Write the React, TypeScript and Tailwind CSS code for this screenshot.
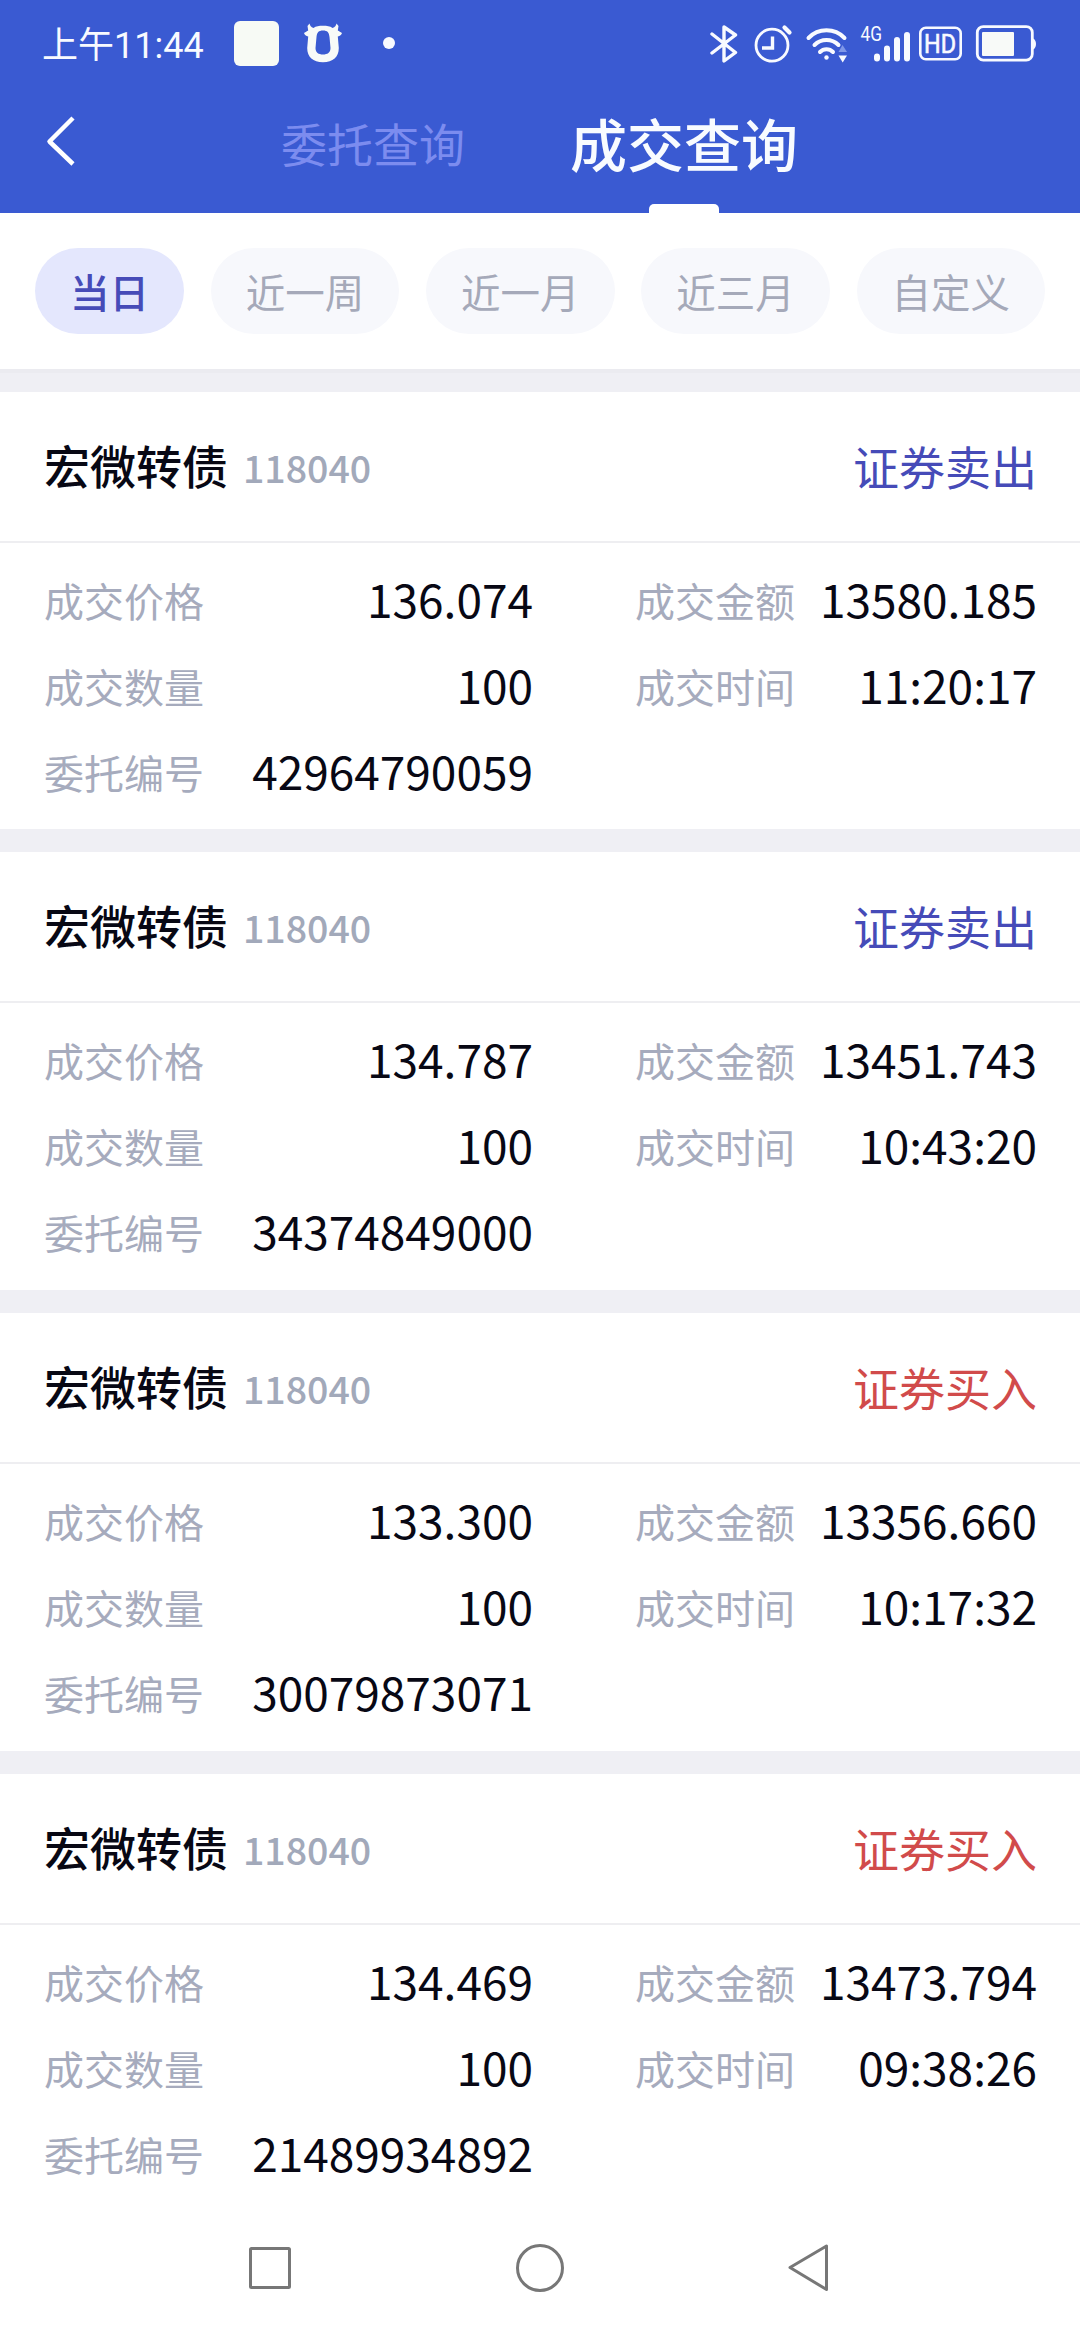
import clsx from "clsx";

type Trade = {
  side: "sell" | "buy";
  price: string;
  amount: string;
  time: string;
  orderNo: string;
};

const ranges = ["当日", "近一周", "近一月", "近三月", "自定义"];

const trades: Trade[] = [
  { side: "sell", price: "136.074", amount: "13580.185", time: "11:20:17", orderNo: "42964790059" },
  { side: "sell", price: "134.787", amount: "13451.743", time: "10:43:20", orderNo: "34374849000" },
  { side: "buy", price: "133.300", amount: "13356.660", time: "10:17:32", orderNo: "30079873071" },
  { side: "buy", price: "134.469", amount: "13473.794", time: "09:38:26", orderNo: "21489934892" },
];

const BullIcon = () => (
  <svg className="ml-[25px] h-[40px] w-[38px]" viewBox="0 0 38 40" fill="#f8faf8">
    <path
      fillRule="evenodd"
      d="M5.5 0.5 C6 3 7 4 9.500 5 C12 3.200 15 2.800 19 2.800 C23 2.800 26 3.200 28.500 5 C31 4 32 3 32.500 0.500 L34.500 3 L33.800 7.500 L38 10 C37.500 12 36 13 33.800 13.500 L34.800 25 C34.800 34 29 39.200 19 39.200 C9 39.200 3.200 34 3.200 25 L4.200 13.500 C2 13 0.500 12 0 10 L4.200 7.500 L3.500 3 Z M19 7.500 C14.500 7.500 13 9.500 12.500 14 L11.500 25 C11.500 29.500 14.500 31.500 19 31.500 C23.500 31.500 26.500 29.500 26.500 25 L25.500 14 C25 9.500 23.500 7.500 19 7.500 Z"
    />
  </svg>
);

const StatusIcons = () => (
  <svg className="ml-auto h-[40px] w-[330px]" viewBox="0 0 330 40" fill="none" stroke="#f8faff">
    <path d="M6 11 L29.500 29.500 L18 38 V4 L29.500 12 L6 30" strokeWidth="3.400" strokeLinejoin="round" strokeLinecap="round" />
    <circle cx="66" cy="22.200" r="16" strokeWidth="2.800" />
    <path d="M66.500 13.500 V25 H56" strokeWidth="3.400" />
    <path d="M78.500 4.500 L83.500 9.500" strokeWidth="4.200" strokeLinecap="round" />
    <path d="M102.500 15 A25 25 0 0 1 138.500 15 M108.500 22 A17 17 0 0 1 132.500 22 M114 29 A9 9 0 0 1 127 29" strokeWidth="4" strokeLinecap="round" />
    <circle cx="120.500" cy="34.500" r="2.200" fill="#f8faff" stroke="none" />
    <path d="M132.500 29 L136.500 22 L141 29 Z" fill="#7f97e8" stroke="none" />
    <path d="M132.500 32.500 H141 L136.700 39.500 Z" fill="#f8faff" stroke="none" />
    <text x="154.500" y="17.500" fontSize="20.500" textLength="21.500" lengthAdjust="spacingAndGlyphs" fill="#f8faff" stroke="none" className="font-['Roboto',sans-serif]">
      4G
    </text>
    <path d="M171 33.500 V35.500 M181 25.500 V35.500 M191 17 V35.500 M201 12 V35.500" strokeWidth="6" strokeLinecap="round" />
    <rect x="214.300" y="4.800" width="40.400" height="31.400" rx="5.500" strokeWidth="2.600" />
    <text x="218" y="29.500" fontSize="25" textLength="32" lengthAdjust="spacingAndGlyphs" fill="#f8faff" strokeWidth="0.600" className="font-['Roboto',sans-serif]">
      HD
    </text>
    <rect x="271.300" y="3.600" width="55" height="33.500" rx="6" strokeWidth="2.800" />
    <rect x="276" y="9" width="32" height="24" rx="1" fill="#f8faf8" stroke="none" />
    <path d="M327 15.500 C331 17 331 25 327 26.500 Z" fill="#f8faff" stroke="none" />
  </svg>
);

const StatusBar = () => (
  <div className="flex h-[86px] items-center pl-[42px] pr-[44px] text-[#f8faff]">
    <span className="mt-1.5 w-[192px] whitespace-nowrap font-['Roboto','Noto_Sans_CJK_SC',sans-serif] text-[36px] leading-none">
      上午11:44
    </span>
    <span className="h-[45px] w-[45px] rounded-md bg-[#f7faf5]" />
    <BullIcon />
    <span className="ml-[41px] h-[12px] w-[12px] rounded-full bg-[#f8faff]" />
    <StatusIcons />
  </div>
);

const Header = () => (
  <header className="h-[213px] bg-[#3a5ad2]">
    <StatusBar />
    <div className="flex h-[127px] items-start">
      <svg className="ml-[45px] mt-[29px] h-[52px] w-[30px]" viewBox="0 0 30 52" fill="none" stroke="#fff" strokeWidth="4.500">
        <path d="M28 3 L4.500 26.500 L28 49" strokeLinejoin="round" />
      </svg>
      <span className="ml-[206px] mt-[24px] text-[46px] leading-[64px] text-[#7c8cef]">委托查询</span>
      <div className="ml-[105px] flex h-full flex-col items-center justify-between">
        <span className="mt-[18px] text-[57px] font-medium leading-[76px] text-[#f8fbff]">成交查询</span>
        <span className="h-[9px] w-[70px] rounded-t-[5px] bg-white" />
      </div>
    </div>
  </header>
);

const RangeTabs = () => (
  <div className="flex h-[160px] items-center justify-between border-b-4 border-[#ebebf0] px-[35px]">
    {ranges.map((range, i) => (
      <button
        key={range}
        className={clsx(
          "h-[86px] rounded-full px-[35px] text-[39.5px]",
          i === 0 ? "bg-[#e4e7fd] font-medium text-[#464bb8]" : "bg-[#f7f8fc] text-[#a5a9b9]"
        )}
      >
        {range}
      </button>
    ))}
  </div>
);

const Field = ({ label, value }: { label: string; value: string }) => (
  <div className="flex h-[86px] items-center justify-between">
    <span className="mt-[3px] text-[40px] text-[#a6abbd]">{label}</span>
    <span className="text-[46px] text-[#080814]">{value}</span>
  </div>
);

const TradeCard = ({ trade }: { trade: Trade }) => (
  <section className="h-[438px] shrink-0 bg-white first:h-[437px]">
    <div className="flex h-[151px] items-center border-b-2 border-[#eeeef1] pb-1 pl-[44px] pr-[43px]">
      <h2 className="text-[46px] font-medium text-[#080814]">宏微转债</h2>
      <span className="ml-[15px] mt-1.5 text-[37.5px] font-medium text-[#a2a9ba]">118040</span>
      <span className={clsx("ml-auto mt-0.5 text-[46px]", trade.side === "sell" ? "text-[#464bb8]" : "text-[#d14b4b]")}>
        {trade.side === "sell" ? "证券卖出" : "证券买入"}
      </span>
    </div>
    <div className="grid grid-cols-[489px_402px] gap-x-[102px] pl-[44px] pt-3">
      <Field label="成交价格" value={trade.price} />
      <Field label="成交金额" value={trade.amount} />
      <Field label="成交数量" value="100" />
      <Field label="成交时间" value={trade.time} />
      <Field label="委托编号" value={trade.orderNo} />
    </div>
  </section>
);

const NavBar = () => (
  <nav className="flex h-[128px] shrink-0 items-center justify-center bg-white pb-[17px]">
    <svg className="h-[52px] w-[600px]" viewBox="0 0 600 52" fill="none" stroke="#777" strokeWidth="3" strokeLinejoin="round">
      <rect x="10.500" y="6.500" width="39" height="39" rx="1" />
      <circle cx="300" cy="26" r="22.500" />
      <path d="M550 25.500 L586.500 4 V47.500 Z" />
    </svg>
  </nav>
);

export default function App() {
  return (
    <div className="flex h-[2340px] w-[1080px] flex-col overflow-hidden bg-white font-['Noto_Sans_CJK_SC',sans-serif]">
      <Header />
      <RangeTabs />
      <main className="flex shrink-0 flex-col gap-[23px] border-t-[19px] border-[#efeff4] bg-[#efeff4]">
        {trades.map((trade) => (
          <TradeCard key={trade.orderNo} trade={trade} />
        ))}
      </main>
      <NavBar />
    </div>
  );
}
